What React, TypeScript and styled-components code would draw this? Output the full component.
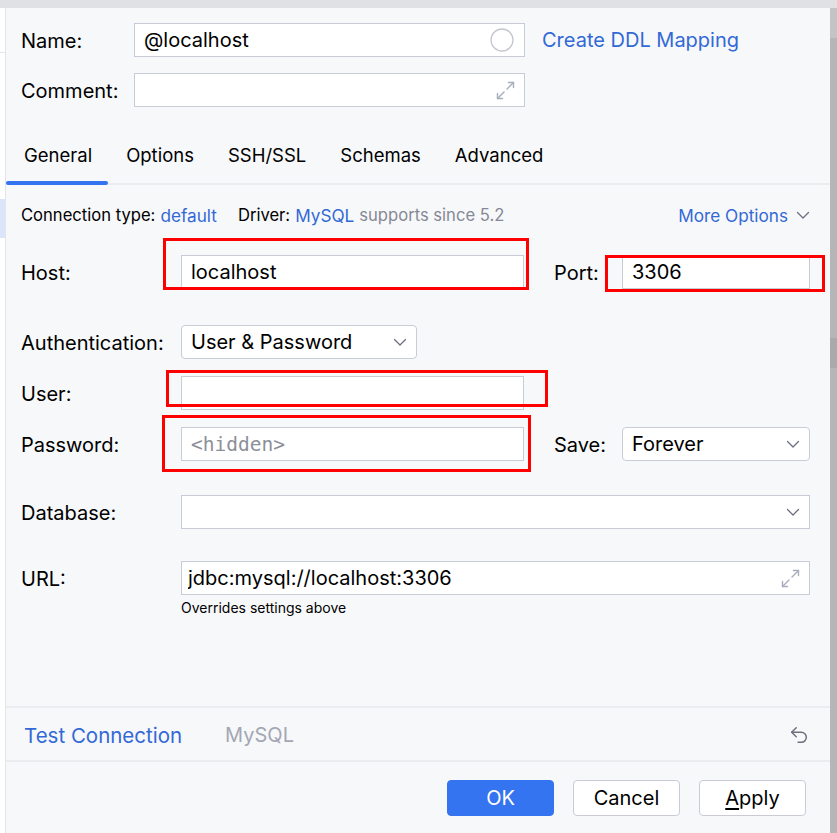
import React from 'react'
import styled, { createGlobalStyle } from 'styled-components'

const GlobalStyle = createGlobalStyle`
  html, body {
    margin: 0;
    padding: 0;
    background: #f7f8fa;
  }
  body {
    font-family: Inter, "Noto Sans", "Liberation Sans", sans-serif;
    color: #000;
    -webkit-font-smoothing: antialiased;
  }
  * { box-sizing: border-box; }
`

const Screen = styled.div`
  position: relative;
  width: 837px;
  height: 833px;
  overflow: hidden;
  display: flex;
  flex-direction: column;
`

const TopStrip = styled.div`
  height: 8px;
  flex: none;
  background: #dfe1e5;
`

const Body = styled.div`
  flex: 1;
  display: flex;
  min-height: 0;
`

const LeftPane = styled.div`
  width: 6px;
  flex: none;
  background: #ffffff;
  border-right: 1px solid #e4e5e8;
  display: flex;
  flex-direction: column;
`

const LeftLine = styled.div`
  margin-top: 44px;
  height: 1px;
  background: #e4e5e8;
`

const LeftSelection = styled.div`
  margin-top: 146px;
  height: 39px;
  background: #dbe5fa;
`

const RightPane = styled.div`
  width: 7px;
  flex: none;
  background: linear-gradient(#c3c4c6 0 30px, #b5b6b8 30px 330px, #a9aaac 330px 360px, #b5b6b8 360px);
`

const Dialog = styled.div`
  flex: 1;
  display: flex;
  flex-direction: column;
  background: #f7f8fa;
  min-width: 0;
`

const Header = styled.div`
  padding: 15px 0 0 15px;
  display: grid;
  grid-template-columns: 113px 391px auto;
  grid-auto-rows: 34px;
  row-gap: 16px;
  align-items: center;
`

const Label = styled.div`
  font-size: 20px;
  line-height: 24px;
  padding-top: 2px;
  color: #000;
  white-space: nowrap;
`

const Field = styled.div<{ $rounded?: boolean; $width?: number }>`
  height: 34px;
  width: ${(p) => (p.$width ? `${p.$width}px` : '100%')};
  background: #fff;
  border: 1px solid #c9ccd6;
  border-radius: ${(p) => (p.$rounded ? '4px' : '0')};
  display: flex;
  align-items: center;
  padding: 0 9px;
  gap: 8px;
  font-size: 20px;
  color: #000;
`

const FieldText = styled.span<{ $mono?: boolean; $muted?: boolean }>`
  flex: 1;
  white-space: nowrap;
  overflow: hidden;
  font-family: ${(p) => (p.$mono ? '"DejaVu Sans Mono", "Liberation Mono", monospace' : 'inherit')};
  font-size: ${(p) => (p.$mono ? '19.5px' : '20px')};
  color: ${(p) => (p.$muted ? '#8c8f99' : '#000')};
`

const Link = styled.span<{ $size?: number }>`
  color: #3369d6;
  font-size: ${(p) => p.$size ?? 20}px;
  white-space: nowrap;
`

const HeaderLink = styled(Link)`
  padding-left: 17px;
`

const Tabs = styled.div`
  margin-top: 16px;
  height: 62px;
  display: flex;
  border-bottom: 2px solid #ebecf0;
`

const Tab = styled.div<{ $active?: boolean }>`
  position: relative;
  display: flex;
  align-items: center;
  padding: 3px 16px 0 18px;
  font-size: 18.5px;
  color: #000;
  &::after {
    content: '';
    display: ${(p) => (p.$active ? 'block' : 'none')};
    position: absolute;
    left: 0;
    right: 0;
    bottom: -2px;
    height: 4px;
    border-radius: 2px;
    background: #3574f0;
  }
`

const Content = styled.div`
  padding: 19px 20px 0 15px;
  display: flex;
  flex-direction: column;
`

const InfoRow = styled.div`
  display: flex;
  align-items: center;
  height: 22px;
  font-size: 16.6px;
`

const InfoGroup = styled.div<{ $gap?: number }>`
  display: flex;
  align-items: center;
  gap: 5px;
  margin-left: ${(p) => p.$gap ?? 0}px;
`

const Muted = styled.span<{ $size?: number }>`
  color: #858995;
  font-size: ${(p) => (p.$size ? `${p.$size}px` : 'inherit')};
`

const MoreOptions = styled.div`
  margin-left: auto;
  display: flex;
  align-items: center;
  gap: 8px;
`

const FormRow = styled.div<{ $top: number }>`
  margin-top: ${(p) => p.$top}px;
  display: grid;
  grid-template-columns: 160px 343px 30px 68px 188px;
  align-items: center;
  height: 34px;
`

const Span = styled.div<{ $from: number; $to: number }>`
  grid-column: ${(p) => p.$from} / ${(p) => p.$to};
  display: flex;
  align-items: center;
`

const Hint = styled.div`
  margin: 5px 0 0 160px;
  font-size: 14px;
  line-height: 16px;
  color: #000;
`

const Spacer = styled.div`
  flex: 1;
`

const Toolbar = styled.div`
  height: 56px;
  flex: none;
  border-top: 2px solid #ebecf0;
  border-bottom: 2px solid #ebecf0;
  display: flex;
  align-items: center;
  padding: 2px 20px 0 18px;
  gap: 43px;
`

const ToolbarEnd = styled.div`
  margin-left: auto;
  display: flex;
  align-items: center;
`

const Footer = styled.div`
  height: 71px;
  flex: none;
  display: flex;
  justify-content: flex-end;
  align-items: flex-start;
  padding: 18px 24px 0 0;
  gap: 19px;
`

const Button = styled.button<{ $primary?: boolean }>`
  width: 107px;
  height: 36px;
  border-radius: 4px;
  font-family: inherit;
  font-size: 20px;
  border: 1px solid ${(p) => (p.$primary ? '#3574f0' : '#c9ccd6')};
  background: ${(p) => (p.$primary ? '#3574f0' : '#ffffff')};
  color: ${(p) => (p.$primary ? '#ffffff' : '#000')};
  padding: 0;
  u { text-decoration-thickness: 1.5px; text-underline-offset: 3px; }
`

const Highlight = styled.div<{ $x: number; $y: number; $w: number; $h: number }>`
  position: absolute;
  left: ${(p) => p.$x}px;
  top: ${(p) => p.$y}px;
  width: ${(p) => p.$w}px;
  height: ${(p) => p.$h}px;
  border: 3px solid #ff0000;
  pointer-events: none;
`

const Chevron = () => (
  <svg width="14" height="9" viewBox="0 0 14 9" fill="none">
    <path d="M1.5 1.5 7 7l5.5-5.5" stroke="#6c707e" strokeWidth="1.3" strokeLinecap="round" strokeLinejoin="round" />
  </svg>
)

const Expand = () => (
  <svg width="19" height="19" viewBox="0 0 19 19" fill="none" stroke="#a8adbd" strokeWidth="1.4" strokeLinecap="round" strokeLinejoin="round">
    <path d="M11 8 17.5 1.5" />
    <path d="M12.5 1.5h5v5" />
    <path d="M8 11 1.5 17.5" />
    <path d="M1.5 12.5v5h5" />
  </svg>
)

const ColorCircle = () => (
  <svg width="24" height="24" viewBox="0 0 24 24" fill="none">
    <circle cx="12" cy="12" r="11" stroke="#c4c7cf" strokeWidth="1.3" fill="#fff" />
  </svg>
)

const Undo = () => (
  <svg width="22" height="22" viewBox="0 0 24 24" fill="none" stroke="#6c707e" strokeWidth="1.6" strokeLinecap="round" strokeLinejoin="round">
    <path d="M9 14 4 9l5-5" />
    <path d="M4 9h10.5a5.5 5.5 0 0 1 5.5 5.5a5.5 5.5 0 0 1-5.5 5.5H11" />
  </svg>
)

export default function App() {
  return (
    <Screen>
      <GlobalStyle />
      <TopStrip />
      <Body>
        <LeftPane>
          <LeftLine />
          <LeftSelection />
        </LeftPane>
        <Dialog>
          <Header>
            <Label>Name:</Label>
            <Field style={{ paddingRight: 10 }}>
              <FieldText>@localhost</FieldText>
              <ColorCircle />
            </Field>
            <HeaderLink>Create DDL Mapping</HeaderLink>
            <Label>Comment:</Label>
            <Field>
              <FieldText />
              <Expand />
            </Field>
          </Header>

          <Tabs>
            <Tab $active>General</Tab>
            <Tab>Options</Tab>
            <Tab>SSH/SSL</Tab>
            <Tab>Schemas</Tab>
            <Tab>Advanced</Tab>
          </Tabs>

          <Content>
            <InfoRow>
              <InfoGroup>
                <span>Connection type:</span>
                <Link $size={17.2}>default</Link>
              </InfoGroup>
              <InfoGroup $gap={21}>
                <span>Driver:</span>
                <Link $size={17.2}>MySQL</Link>
                <Muted>supports since 5.2</Muted>
              </InfoGroup>
              <MoreOptions>
                <Link $size={17.2}>More Options</Link>
                <Chevron />
              </MoreOptions>
            </InfoRow>

            <FormRow $top={29}>
              <Label>Host:</Label>
              <Field>
                <FieldText>localhost</FieldText>
              </Field>
              <span />
              <Label>Port:</Label>
              <Field>
                <FieldText>3306</FieldText>
              </Field>
            </FormRow>

            <FormRow $top={36}>
              <Label>Authentication:</Label>
              <Span $from={2} $to={3}>
                <Field $rounded $width={236}>
                  <FieldText>User &amp; Password</FieldText>
                  <Chevron />
                </Field>
              </Span>
            </FormRow>

            <FormRow $top={17}>
              <Label>User:</Label>
              <Field>
                <FieldText />
              </Field>
            </FormRow>

            <FormRow $top={17}>
              <Label>Password:</Label>
              <Field>
                <FieldText $mono $muted>&lt;hidden&gt;</FieldText>
              </Field>
              <span />
              <Label>Save:</Label>
              <Field $rounded>
                <FieldText>Forever</FieldText>
                <Chevron />
              </Field>
            </FormRow>

            <FormRow $top={34}>
              <Label>Database:</Label>
              <Span $from={2} $to={6}>
                <Field>
                  <FieldText />
                  <Chevron />
                </Field>
              </Span>
            </FormRow>

            <FormRow $top={32}>
              <Label>URL:</Label>
              <Span $from={2} $to={6}>
                <Field style={{ paddingLeft: 6 }}>
                  <FieldText>jdbc:mysql://localhost:3306</FieldText>
                  <Expand />
                </Field>
              </Span>
            </FormRow>
            <Hint>Overrides settings above</Hint>
          </Content>

          <Spacer />

          <Toolbar>
            <Link $size={20.5}>Test Connection</Link>
            <Muted $size={20} style={{ color: '#a3a7b3' }}>MySQL</Muted>
            <ToolbarEnd>
              <Undo />
            </ToolbarEnd>
          </Toolbar>

          <Footer>
            <Button $primary>OK</Button>
            <Button>Cancel</Button>
            <Button>
              <u>A</u>pply
            </Button>
          </Footer>
        </Dialog>
        <RightPane />
      </Body>

      <Highlight $x={163} $y={238} $w={366} $h={52} />
      <Highlight $x={605} $y={255} $w={220} $h={37} />
      <Highlight $x={166} $y={370} $w={382} $h={37} />
      <Highlight $x={162} $y={415} $w={369} $h={57} />
    </Screen>
  )
}
